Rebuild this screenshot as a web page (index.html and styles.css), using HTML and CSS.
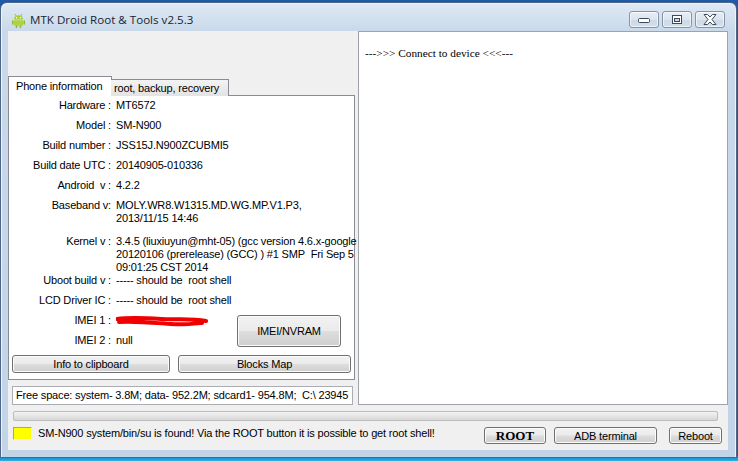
FILE: index.html
```html
<!DOCTYPE html>
<html>
<head>
<meta charset="utf-8">
<title>MTK Droid Root &amp; Tools v2.5.3</title>
<link rel="stylesheet" href="styles.css">
</head>
<body>
<div class="window">
  <div class="titlebar">
    <svg class="appicon" width="13" height="15" viewBox="0 0 14 16">
      <path d="M3.2 1 L4.4 3 M10.8 1 L9.6 3" stroke="#8fb836" stroke-width="1" fill="none"/>
      <path d="M2 7 A5 4.6 0 0 1 12 7 Z" fill="#a6cc3a"/>
      <circle cx="5" cy="5" r="0.8" fill="#fff"/>
      <circle cx="9" cy="5" r="0.8" fill="#fff"/>
      <rect x="2" y="7.6" width="10" height="6" rx="1.2" fill="#b0d23e"/>
      <rect x="0" y="7.6" width="1.6" height="5" rx="0.8" fill="#8fb836"/>
      <rect x="12.4" y="7.6" width="1.6" height="5" rx="0.8" fill="#8fb836"/>
      <rect x="4" y="13" width="1.8" height="3" rx="0.9" fill="#8fb836"/>
      <rect x="8.2" y="13" width="1.8" height="3" rx="0.9" fill="#8fb836"/>
    </svg>
    <span class="title">MTK Droid Root &amp; Tools v2.5.3</span>
    <div class="caption">
      <div class="capbtn">
        <svg width="14" height="8" viewBox="0 0 14 8"><rect x="1.5" y="2.5" width="11" height="4" rx="1" fill="#fff" stroke="#3c4a5c"/></svg>
      </div>
      <div class="capbtn">
        <svg width="14" height="10" viewBox="0 0 14 10"><rect x="2.5" y="0.5" width="9" height="8" fill="#fff" stroke="#3c4a5c"/><rect x="4.5" y="3.5" width="5" height="3" fill="#c8d4e2" stroke="#3c4a5c"/></svg>
      </div>
      <div class="capbtn">
        <svg width="16" height="11" viewBox="0 0 16 11"><path d="M2 0.5 H5.5 L8 3 L10.5 0.5 H14 L10 5.5 L14 10.5 H10.5 L8 8 L5.5 10.5 H2 L6 5.5 Z" fill="#fff" stroke="#3c4a5c" stroke-linejoin="round"/></svg>
      </div>
    </div>
  </div>
  <div class="client">
    <div class="main">
      <div class="left">
        <div class="tabs">
          <div class="tab tab-active">Phone information</div>
          <div class="tab tab-idle">root, backup, recovery</div>
        </div>
        <div class="tabpanel">
          <div class="row"><span class="lbl">Hardware :</span><span class="val">MT6572</span></div>
          <div class="row gap7"><span class="lbl">Model :</span><span class="val">SM-N900</span></div>
          <div class="row gap7"><span class="lbl">Build number :</span><span class="val">JSS15J.N900ZCUBMI5</span></div>
          <div class="row gap7"><span class="lbl">Build date UTC :</span><span class="val">20140905-010336</span></div>
          <div class="row gap7"><span class="lbl">Android&nbsp; v :</span><span class="val">4.2.2</span></div>
          <div class="row gap7"><span class="lbl">Baseband v:</span><span class="val">MOLY.WR8.W1315.MD.WG.MP.V1.P3,<br>2013/11/15 14:46</span></div>
          <div class="row gap10"><span class="lbl">Kernel v :</span><span class="val">3.4.5 (liuxiuyun@mht-05) (gcc version 4.6.x-google<br>20120106 (prerelease) (GCC) ) #1 SMP&nbsp; Fri Sep 5<br>09:01:25 CST 2014</span></div>
          <div class="row"><span class="lbl">Uboot build v :</span><span class="val">----- should be&nbsp; root shell</span></div>
          <div class="row gap7"><span class="lbl">LCD Driver IC :</span><span class="val">----- should be&nbsp; root shell</span></div>
          <div class="imei">
            <div class="imei-rows">
              <div class="row"><span class="lbl">IMEI 1 :</span><span class="val redacted">
                <svg class="scribble" width="92" height="12" viewBox="0 0 92 12"><path d="M1 4 C 15 2, 30 3, 45 4 C 60 5, 75 3, 90 6 M3 7 C 20 6, 40 8, 55 9 C 65 10, 75 9, 86 8" stroke="#f00000" stroke-width="4" fill="none" stroke-linecap="round"/></svg>
              </span></div>
              <div class="row gap7"><span class="lbl">IMEI 2 :</span><span class="val">null</span></div>
            </div>
            <div class="btn btn-imei">IMEI/NVRAM</div>
          </div>
          <div class="btnrow">
            <div class="btn btn-info">Info to clipboard</div>
            <div class="btn btn-blocks">Blocks Map</div>
          </div>
        </div>
        <div class="freespace">Free space: system- 3.8M; data- 952.2M; sdcard1- 954.8M;&nbsp; C:\ 23945</div>
      </div>
      <div class="log">---&gt;&gt;&gt; Connect to device &lt;&lt;&lt;---</div>
    </div>
    <div class="progress"></div>
    <div class="status">
      <div class="indicator"></div>
      <div class="statustext">SM-N900 system/bin/su is found! Via the ROOT button it is possible to get root shell!</div>
      <div class="btn btn-root">ROOT</div>
      <div class="btn btn-adb">ADB terminal</div>
      <div class="btn btn-reboot">Reboot</div>
    </div>
  </div>
</div>
</body>
</html>
```
FILE: styles.css
```css
html, body {
  margin: 0;
  padding: 0;
}
body {
  width: 738px;
  height: 461px;
  overflow: hidden;
  background: linear-gradient(to bottom, #1d5ba8 0px, #1d5ba8 455px, #1f9fd8 459px, #28b3e6 461px);
  font-family: "Liberation Sans", Arial, sans-serif;
  font-size: 11px;
  letter-spacing: -0.17px;
  color: #000;
}
.window {
  margin-top: 2px;
  border: 1px solid #4d6686;
  border-radius: 7px 7px 0 0;
  background: linear-gradient(to bottom, #dfe9f5 0px, #c9d9ea 28px, #c3d4e8 100%);
  padding: 0 8px 7px 7px;
  box-sizing: content-box;
  width: 720px;
  height: 447px;
  box-shadow: inset 1px 1px 0 #eef4fa, inset -1px 0 0 #eef4fa;
}
.titlebar {
  height: 28px;
  display: flex;
  align-items: flex-start;
}
.appicon {
  margin-left: 4px;
  margin-top: 10px;
}
.title {
  margin-left: 5px;
  margin-top: 9px;
  line-height: 16px;
  font-family: "Open Sans", "Noto Sans", sans-serif;
  font-size: 11.6px;
  letter-spacing: 0;
  color: #1b2431;
}
.caption {
  margin-left: auto;
  margin-right: 3px;
  margin-top: 8px;
  display: flex;
  gap: 3px;
}
.capbtn {
  width: 28px;
  height: 15px;
  border: 1px solid #8594a8;
  border-radius: 3px;
  background: linear-gradient(to bottom, #e8eef6 0%, #dbe4ef 50%, #cdd9e7 51%, #d3dfec 100%);
  box-shadow: inset 0 0 0 1px rgba(255,255,255,0.6);
  display: flex;
  align-items: center;
  justify-content: center;
}
.client {
  height: 419px;
  background: #f0f0f0;
}
.main {
  display: flex;
  height: 374px;
}
.left {
  width: 350px;
}
.tabs {
  margin-top: 45px;
  display: flex;
  align-items: flex-end;
  height: 20px;
  position: relative;
  z-index: 1;
}
.tab {
  box-sizing: border-box;
  border: 1px solid #898c95;
  white-space: nowrap;
}
.tab-active {
  width: 104px;
  height: 20px;
  background: #fff;
  border-bottom: none;
  padding: 3px 0 0 7px;
}
.tab-idle {
  width: 118px;
  height: 17px;
  margin-left: -1px;
  border-left: none;
  border-bottom: none;
  background: linear-gradient(to bottom, #f3f3f3, #e3e3e3);
  padding: 2px 0 0 3px;
}
.tabpanel {
  margin-top: -1px;
  width: 347px;
  height: 285px;
  box-sizing: border-box;
  border: 1px solid #898c95;
  background: #fff;
  padding-top: 3px;
}
.row {
  display: flex;
  line-height: 13px;
}
.gap7 { margin-top: 7px; }
.gap10 { margin-top: 10px; }
.lbl {
  width: 102px;
  text-align: right;
  white-space: pre;
  flex: none;
}
.val {
  margin-left: 5px;
  white-space: nowrap;
}
.redacted {
  width: 92px;
  height: 13px;
}
.scribble {
  display: block;
  margin-top: 1px;
}
.imei {
  display: flex;
  margin-top: 7px;
}
.imei-rows {
  width: 228px;
}
.btn {
  box-sizing: border-box;
  border: 1px solid #707070;
  border-radius: 3px;
  background: linear-gradient(to bottom, #f2f2f2 0%, #ebebeb 48%, #dddddd 52%, #cfcfcf 100%);
  box-shadow: inset 0 0 0 1px #fbfbfb;
  display: flex;
  align-items: center;
  justify-content: center;
  white-space: nowrap;
}
.btn-imei {
  width: 104px;
  height: 32px;
  margin-top: 1px;
}
.btnrow {
  display: flex;
  margin-top: 8px;
  margin-left: 3px;
  gap: 8px;
}
.btn-info {
  width: 158px;
  height: 18px;
}
.btn-blocks {
  width: 173px;
  height: 18px;
}
.freespace {
  margin-top: 6px;
  margin-left: 4px;
  width: 341px;
  height: 19px;
  box-sizing: border-box;
  border: 1px solid #abadb3;
  background: #fff;
  padding: 2px 0 0 3px;
  white-space: nowrap;
  overflow: hidden;
}
.log {
  width: 370px;
  height: 374px;
  box-sizing: border-box;
  border: 1px solid #9ea3ab;
  background: #fff;
  padding: 15px 0 0 6px;
  font-family: "Liberation Serif", "Times New Roman", serif;
  font-size: 11.3px;
  letter-spacing: 0;
}
.progress {
  margin-top: 6px;
  margin-left: 5px;
  width: 705px;
  height: 10px;
  box-sizing: border-box;
  border: 1px solid #bcbcbc;
  border-radius: 2px;
  background: linear-gradient(to bottom, #f3f3f3 0%, #e6e6e6 50%, #d6d6d6 100%);
}
.status {
  margin-top: 6px;
  display: flex;
  align-items: flex-start;
}
.indicator {
  margin-left: 5px;
  width: 19px;
  height: 13px;
  box-sizing: border-box;
  border: 1px solid #a0a0a0;
  border-right-color: #fff;
  border-bottom-color: #fff;
  background: #ffff00;
}
.statustext {
  margin-left: 6px;
  line-height: 13px;
  white-space: nowrap;
  width: 446px;
}
.btn-root {
  width: 62px;
  height: 17px;
  font-family: "Liberation Serif", "Times New Roman", serif;
  font-weight: bold;
  font-size: 13px;
  letter-spacing: 0;
}
.btn-adb {
  margin-left: 8px;
  width: 103px;
  height: 17px;
}
.btn-reboot {
  margin-left: 12px;
  width: 53px;
  height: 17px;
}
```
